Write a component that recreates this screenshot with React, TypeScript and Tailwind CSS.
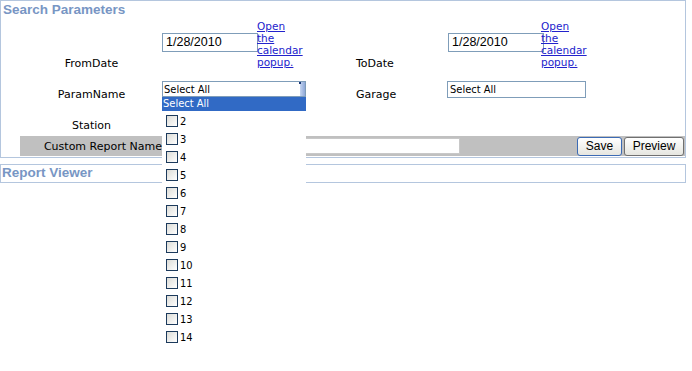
import React from "react";

const verdana = { fontFamily: '"DejaVu Sans", Verdana, sans-serif' };

function CalLink() {
  return (
    <a
      href="#"
      className="block w-min text-[10.5px] leading-[12px] text-[#2222cc] underline"
      style={verdana}
    >
      Open the calendar popup.
    </a>
  );
}

function DateBox() {
  return (
    <div className="mt-[15px] h-[19px] w-[96px] border border-[#7f9db9] bg-white pl-[3px] text-[12.5px] leading-[17px] text-black font-['Liberation_Sans',Arial,sans-serif]">
      1/28/2010
    </div>
  );
}

export default function App() {
  const items = ["2", "3", "4", "5", "6", "7", "8", "9", "10", "11", "12", "13", "14"];
  return (
    <div className="relative h-[371px] w-[692px] bg-white text-black" style={verdana}>
      {/* Search Parameters */}
      <div className="ml-0 mr-[6px] h-[158px] border border-[#b4c6de]">
        <div className="pl-[2px] pt-[1px] text-[13.5px] font-bold leading-[16px] text-[#7896c4] font-['Liberation_Sans',Arial,sans-serif]">
          Search Parameters
        </div>
        {/* Row 1 */}
        <div className="flex h-[55px]">
          <div className="flex w-[161px] items-end justify-center pl-[20px] pb-[3px] text-[11px] leading-[12px]">
            FromDate
          </div>
          <div className="flex w-[194px] items-start">
            <DateBox />
            <div className="-ml-[1px] pt-[2px]">
              <CalLink />
            </div>
          </div>
          <div className="flex w-[92px] items-end pb-[3px] text-[11px] leading-[12px]">ToDate</div>
          <div className="flex items-start">
            <DateBox />
            <div className="-ml-[3px] pt-[2px]">
              <CalLink />
            </div>
          </div>
        </div>
        {/* Row 2 */}
        <div className="flex h-[31px] items-center">
          <div className="flex w-[161px] justify-center pl-[20px] pt-[12px] text-[11px] leading-[12px]">ParamName</div>
          <div className="w-[194px]"></div>
          <div className="w-[91px] pt-[12px] text-[11px] leading-[12px]">Garage</div>
          <div className="mt-[1px] h-[17px] w-[139px] border border-[#7f9db9] bg-white pl-[2px] text-[11px] leading-[15px] font-['DejaVu_Sans_Condensed',Tahoma,sans-serif]">
            Select All
          </div>
        </div>
        {/* Row 3 */}
        <div className="flex h-[32px] items-center">
          <div className="flex w-[161px] justify-center pl-[20px] pt-[11px] text-[11px] leading-[12px]">Station</div>
        </div>
        {/* Row 4 */}
        <div className="ml-[19px] mr-0 flex h-[20px] items-center bg-[#c0c0c0]">
          <div className="flex w-[143px] justify-end whitespace-nowrap pr-[1px] pt-[1px] text-[11px] leading-[12px]">Custom Report Name</div>
          <div className="ml-[1px] h-[16px] w-[296px] border border-[#c8c8c8] bg-white"></div>
          <div className="ml-auto flex gap-[2px] pr-[1px]">
            <button className="h-[19px] w-[45px] rounded-[3px] border border-[#3c6bb5] bg-gradient-to-b from-white to-[#e6e6e0] text-[12px] leading-[17px] font-['Liberation_Sans',Arial,sans-serif]">
              Save
            </button>
            <button className="h-[19px] w-[60px] rounded-[3px] border border-[#707070] bg-gradient-to-b from-white to-[#e6e6e0] text-[12px] leading-[17px] font-['Liberation_Sans',Arial,sans-serif]">
              Preview
            </button>
          </div>
        </div>
      </div>
      {/* Report Viewer */}
      <div className="mr-[6px] mt-[6px] h-[19px] border border-[#b4c6de]">
        <div className="pl-[1px] text-[13.5px] font-bold leading-[16px] text-[#7896c4] font-['Liberation_Sans',Arial,sans-serif]">
          Report Viewer
        </div>
      </div>

      {/* Param select + dropdown overlay */}
      <div className="absolute left-[162px] top-[81px] w-[144px]">
        <div className="relative h-[16px] border border-[#7f9db9] bg-white pl-[1px] text-[11px] leading-[15px] font-['DejaVu_Sans_Condensed',Tahoma,sans-serif]">
          Select All
          <div className="absolute right-0 top-0 h-[14px] w-[5px] bg-gradient-to-r from-[#c5d5f0] to-[#8fa8d8]"></div>
          <div className="absolute right-[4px] top-0 h-[2px] w-[2px] bg-[#1c3a78]"></div>
        </div>
        <div className="h-[14px] bg-[#316ac5] pl-[1px] text-[11px] leading-[14px] text-white font-['DejaVu_Sans_Condensed',Tahoma,sans-serif]">
          Select All
        </div>
        <div className="h-[250px] bg-white pt-[3px]">
          {items.map((n) => (
            <div key={n} className="flex h-[18px] items-start pl-[4px]">
              <span className="mt-[1px] inline-block h-[12px] w-[12px] border border-[#1c3a5c] bg-gradient-to-br from-[#dcdcd7] to-white"></span>
              <span className="ml-[2px] text-[11px] leading-[16px] font-['DejaVu_Sans_Condensed',Tahoma,sans-serif]">{n}</span>
            </div>
          ))}
        </div>
      </div>
    </div>
  );
}
